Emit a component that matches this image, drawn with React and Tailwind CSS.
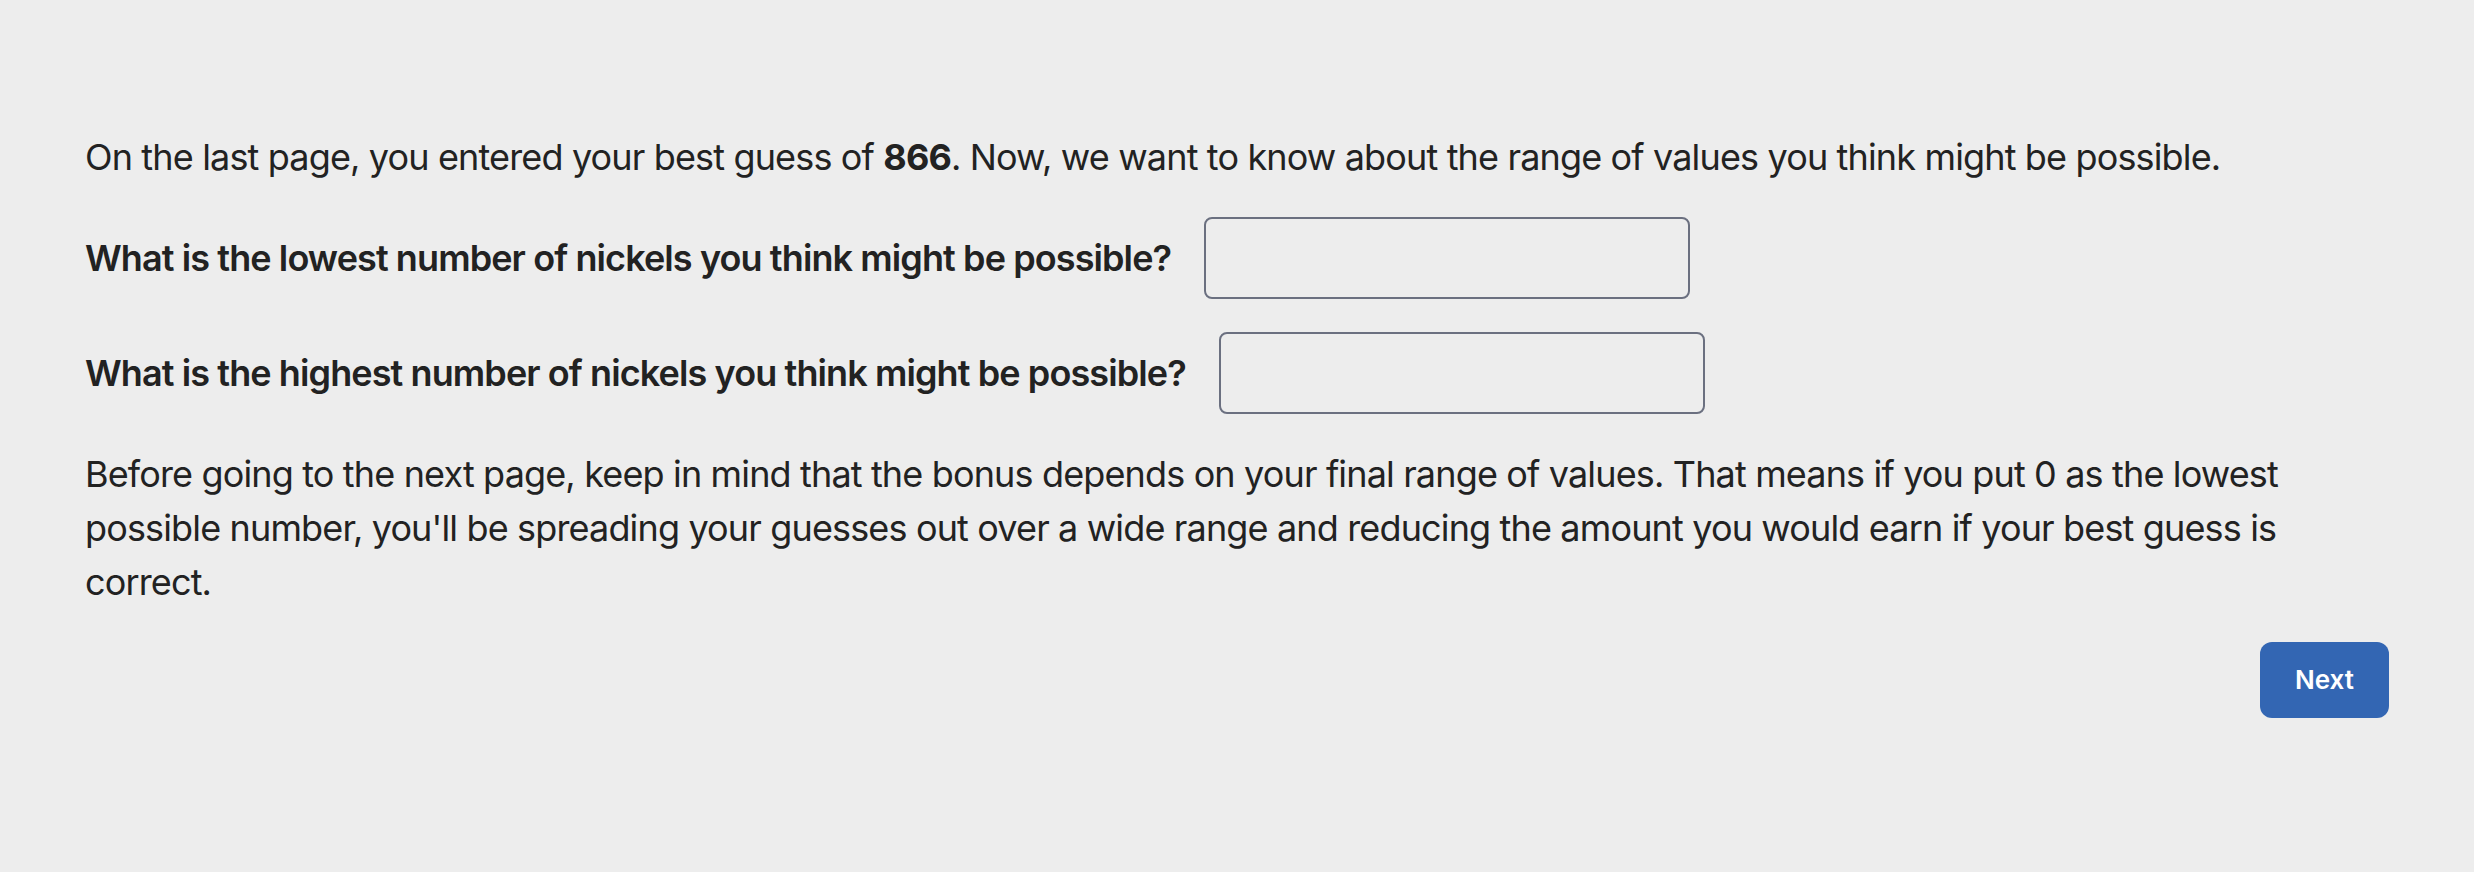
export default function App() {
  return (
    <div
      className="min-h-[872px] bg-[#ededed] px-[85px] pt-[130px] text-[#222222]"
      style={{ fontFamily: "Inter, 'Noto Sans', sans-serif" }}
    >
      <div className="flex flex-col gap-[33px] text-[36px] leading-[54px] tracking-[-0.85px]">
        <p>
          On the last page, you entered your best guess of <b className="font-bold">866</b>. Now, we want to know
          about the range of values you think might be possible.
        </p>

        <div className="flex items-center gap-[33px]">
          <label className="font-semibold tracking-[-0.9px]">
            What is the lowest number of nickels you think might be possible?
          </label>
          <input
            type="text"
            className="h-[82px] w-[486px] rounded-[8px] border-2 border-[#6b7080] bg-transparent"
          />
        </div>

        <div className="flex items-center gap-[33px]">
          <label className="font-semibold tracking-[-0.9px]">
            What is the highest number of nickels you think might be possible?
          </label>
          <input
            type="text"
            className="h-[82px] w-[486px] rounded-[8px] border-2 border-[#6b7080] bg-transparent"
          />
        </div>

        <p>
          Before going to the next page, keep in mind that the bonus depends on your final range of values. That
          means if you put 0 as the lowest possible number, you'll be spreading your guesses out over a wide range
          and reducing the amount you would earn if your best guess is correct.
        </p>

        <div className="flex justify-end">
          <button className="h-[76px] rounded-[12px] bg-[#3366b3] px-[35px] text-[26px] font-semibold tracking-normal text-white">
            Next
          </button>
        </div>
      </div>
    </div>
  );
}
